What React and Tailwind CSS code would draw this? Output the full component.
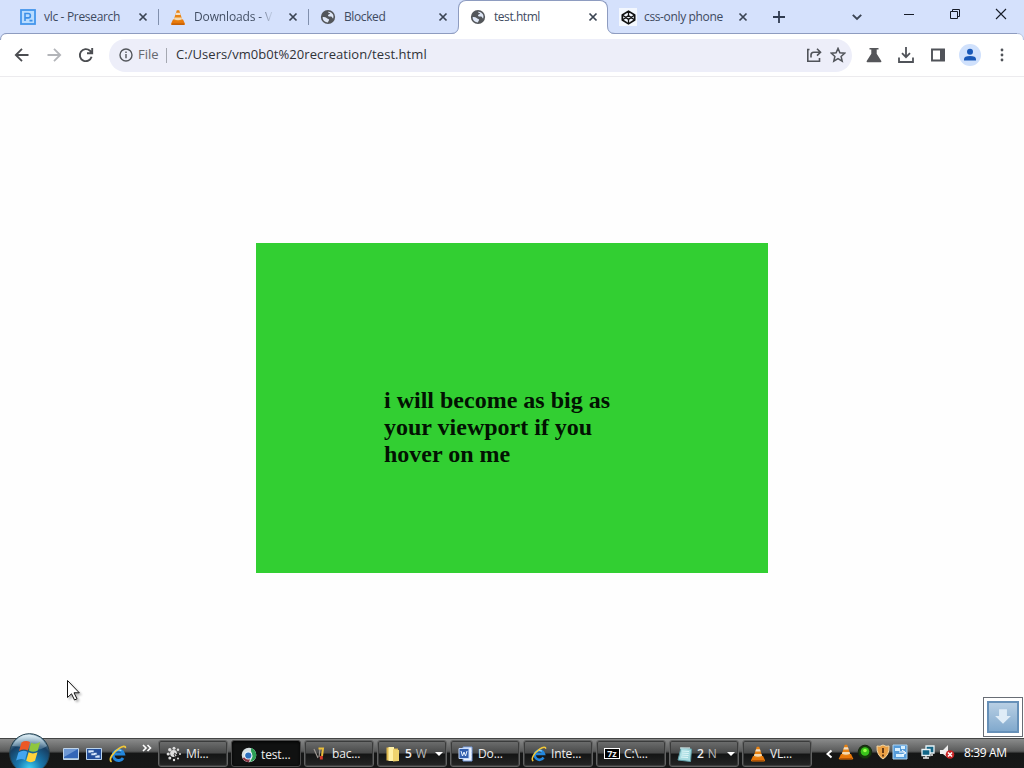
import React from "react";

function Cone({ className }) {
  return (
    <svg viewBox="0 0 16 16" className={className}>
      <path d="M3 10h10l2 4.2q.2 1.200-.8 1.200H1.800q-1 0-.8-1.200z" fill="#e8780a" />
      <path d="M6.800.8h2.400l3.300 10.200q-4.500 2.600-9 0z" fill="#e98212" />
      <path d="M6.100 3.200h3.800l.8 2.300H5.300z" fill="#f2dfc4" />
      <path d="M4.500 8h7l.6 1.800q-4.100 1.800-8.200 0z" fill="#f4d9b0" />
      <path d="M2 14.600h12" stroke="#b05205" strokeWidth="1" />
    </svg>
  );
}

function Presearch() {
  return (
    <svg viewBox="0 0 16 16" className="h-4 w-4">
      <rect x="1" y="1" width="14" height="14" fill="#b9dcff" stroke="#4496ec" strokeWidth="1.800" />
      <path d="M5 12V4.500h3.200a2.200 2.200 0 0 1 0 4.400H5M9.500 11.600h3" fill="none" stroke="#3b8fe8" strokeWidth="1.600" />
    </svg>
  );
}

function Globe() {
  return (
    <svg viewBox="0 0 16 16" className="h-4 w-4">
      <circle cx="8" cy="8" r="7.100" fill="#53565a" />
      <path d="M2.600 8.200c1.600-.3 3.200.1 4.400 1.100.9.7 1.900.5 2.100 1.500.2.9-.9 1-1.100 2.600-3-.1-5.400-2.200-5.400-5.200zM7.800 2.700c2-.4 4.200 1 5.200 2.900.6 1.300.6 2.600.1 3.900-.6-.1-.8-1.300-1.500-1.800-.9-.6-2.200.1-3.100-.5-.8-.5-.5-1.400.2-1.700.6-.3 1.300 0 1.400-.8.100-.8-1.900-.8-2.300-2z" fill="#dfe7f6" />
    </svg>
  );
}

function Codepen() {
  return (
    <span className="flex h-[18px] w-[18px] shrink-0 items-center justify-center bg-[#f3f7fe]">
      <svg viewBox="0 0 16 16" className="h-[15px] w-[15px]" fill="none" stroke="#111" strokeWidth="1.400" strokeLinejoin="round">
        <path d="M8 1.200 14.600 5.400v5.200L8 14.800 1.400 10.600V5.400z" strokeWidth="1.800" />
        <path d="M1.400 5.400 8 10l6.600-4.600M1.400 10.600 8 6l6.600 4.600M8 1.200V6M8 10v4.800" />
      </svg>
    </span>
  );
}

function TabX() {
  return (
    <svg viewBox="0 0 16 16" className="h-4 w-4 shrink-0" fill="none" stroke="#3b4453" strokeWidth="1.700">
      <path d="m4.500 4.500 7 7m0-7-7 7" />
    </svg>
  );
}

function Tab({ icon, title, width, active, divider, fade }) {
  return (
    <div className={`relative flex h-[34px] w-[150px] shrink-0 items-center pr-[7px] ${active ? "rounded-t-[8px] border border-b-0 border-[#8e9cc0] bg-white pb-px pl-[11px]" : "pl-3"}`}>
      <span className="flex h-4 w-4 shrink-0 items-center justify-center">{icon}</span>
      <span className={`ml-2 w-[91px] shrink-0 text-[12px] whitespace-nowrap ${width} ${fade ? "bg-gradient-to-r from-[#3e4a5f] from-72% to-[#b8c4dc] to-84% bg-clip-text text-transparent" : "text-[#3e4a5f]"}`}>{title}</span>
      <TabX />
      {divider && <span className="absolute top-[9px] -right-px h-4 w-px bg-[#8190ad]" />}
      {active && (
        <>
          <svg viewBox="0 0 8 8" className="absolute bottom-0 -left-2 h-2 w-2"><path d="M8 0v8H0q7.500 0 7.500-8" fill="#fff" /><path d="M0 7.500Q7.500 7.500 7.500 0" fill="none" stroke="#8e9cc0" /></svg>
          <svg viewBox="0 0 8 8" className="absolute -right-2 bottom-0 h-2 w-2"><path d="M0 0v8h8Q.5 8 .5 0" fill="#fff" /><path d="M8 7.500Q.5 7.500.5 0" fill="none" stroke="#8e9cc0" /></svg>
        </>
      )}
    </div>
  );
}

function TabStrip() {
  return (
    <div className="flex h-[34px] border-b border-[#8e9cc0] bg-[#d5e1fc] pl-2">
      <Tab icon={<Presearch />} title="vlc - Presearch" width="tracking-[-0.320px]" divider />
      <Tab icon={<Cone className="h-[17px] w-4" />} title="Downloads - V" width="tracking-[-0.140px]" divider fade />
      <Tab icon={<Globe />} title="Blocked" width="tracking-[-0.400px]" />
      <Tab icon={<Globe />} title="test.html" width="tracking-[-0.450px]" active />
      <Tab icon={<Codepen />} title="css-only phone" width="tracking-[-0.360px]" />
      <svg viewBox="0 0 16 16" className="mt-[9px] ml-[13px] h-4 w-4 shrink-0" stroke="#303b50" strokeWidth="1.800"><path d="M2 8h12M8 2v12" /></svg>
      <svg viewBox="0 0 16 16" className="mt-[9px] ml-[62px] h-4 w-4 shrink-0" fill="none" stroke="#3b4453" strokeWidth="1.900"><path d="m3.800 5.800 4.200 4.200 4.200-4.200" /></svg>
      <div className="mt-[7px] ml-[38px] flex w-[104px] shrink-0 justify-between text-[#171c28]">
        <svg viewBox="0 0 12 14" className="h-[14px] w-3" stroke="currentColor"><path d="M1 7.500h10" /></svg>
        <svg viewBox="0 0 12 14" className="h-[14px] w-3" fill="none" stroke="currentColor"><path d="M1.500 4.500h7v7h-7zM3.500 4.500v-2h7v7h-2" /></svg>
        <svg viewBox="0 0 12 14" className="h-[14px] w-3" stroke="currentColor" strokeWidth="1.100"><path d="m1 2 10 10M11 2 1 12" /></svg>
      </div>
    </div>
  );
}

function Toolbar() {
  return (
    <div className="relative flex h-[43px] items-center border-b border-[#ecebee] bg-white pl-[13px]">
      <svg viewBox="0 0 7 7" className="absolute top-[-1px] left-0 h-[7px] w-[7px]"><path d="M0 0h7Q.5.500.5 7H0z" fill="#d5e1fc" /><path d="M7 .5Q.5.500.5 7" fill="none" stroke="#8e9cc0" /></svg>
      <svg viewBox="0 0 7 7" className="absolute top-[-1px] right-0 h-[7px] w-[7px]"><path d="M7 0H0q6.500.5 6.500 7H7z" fill="#d5e1fc" /><path d="M0 .5Q6.500.500 6.500 7" fill="none" stroke="#b9c5e2" /></svg>
      <svg viewBox="0 0 18 18" className="h-[18px] w-[18px]" fill="none" stroke="#4b4d51" strokeWidth="1.800"><path d="M15.500 9H3M9 2.800 2.800 9 9 15.200" /></svg>
      <svg viewBox="0 0 18 18" className="ml-[14px] h-[18px] w-[18px]" fill="none" stroke="#b3b5b9" strokeWidth="1.800"><path d="M2.500 9H15M9 2.800 15.200 9 9 15.200" /></svg>
      <svg viewBox="0 0 18 18" className="ml-[14px] h-[18px] w-[18px]" fill="none" stroke="#4b4d51" strokeWidth="1.900"><path d="M14.600 10.800A6 6 0 1 1 13 4.800L15 6.800M15.200 2v5.200H10" /></svg>
      <div className="ml-[14px] flex h-[33px] w-[743px] items-center rounded-full bg-[#edeef9] pl-[10px]">
        <svg viewBox="0 0 14 14" className="h-[14px] w-[14px]" fill="none" stroke="#53565b" strokeWidth="1.400"><circle cx="7" cy="7" r="6" /><path d="M7 6v4.200M7 3.600v1.500" /></svg>
        <span className="ml-[5px] w-[28px] text-[13px] text-[#66686e]">File</span>
        <span className="h-[15px] w-px bg-[#a5a8b1]" />
        <span className="ml-[9px] text-[13px] tracking-[0.060px] whitespace-nowrap text-[#303238]">C:/Users/vm0b0t%20recreation/test.html</span>
        <svg viewBox="0 0 16 16" className="mr-2 ml-auto h-4 w-4" fill="none" stroke="#505359" strokeWidth="1.600"><path d="M3.500 2.500h-1.700v11.700H13.500V11M5 10.500V8q0-2.800 2.800-2.800h6M11 1.800l3.500 3.400L11 8.600" /></svg>
        <svg viewBox="0 0 16 16" className="mr-[6px] h-4 w-4" fill="none" stroke="#505359" strokeWidth="1.500"><path d="m8 1.400 1.900 4.300 4.800.5-3.600 3.200 1.100 4.800L8 11.700l-4.200 2.500 1.100-4.800-3.600-3.200 4.800-.5z" /></svg>
      </div>
      <svg viewBox="0 0 16 16" className="ml-[14px] h-4 w-4" fill="#55565a"><path d="M3.500 1h9v1.500h-1.800v4.200L15.300 14q.5 1.200-.8 1.200h-13Q.2 15.200.7 14l4.600-7.300V2.500H3.500z" /></svg>
      <svg viewBox="0 0 18 18" className="ml-[15px] h-[18px] w-[18px]" fill="none" stroke="#505359" strokeWidth="1.800"><path d="M9 1v10M5 7.200l4 4 4-4M2 11.500V16h14v-4.500" /></svg>
      <svg viewBox="0 0 16 16" className="ml-[15px] h-4 w-4"><path d="M2 2.500h12v11H2z" fill="none" stroke="#505359" strokeWidth="1.900" /><path d="M10 2h5v12h-5z" fill="#505359" /></svg>
      <svg viewBox="0 0 22 22" className="ml-[13px] h-[22px] w-[22px]"><circle cx="11" cy="11" r="11" fill="#d0e1fc" /><circle cx="11" cy="7.700" r="3" fill="#1858b8" /><path d="M5 16.500v-1.300q0-3.200 6-3.200t6 3.200v1.300z" fill="#1858b8" /></svg>
      <svg viewBox="0 0 4 16" className="ml-[19px] h-4 w-1" fill="#505359"><circle cx="2" cy="3" r="1.400" /><circle cx="2" cy="8" r="1.400" /><circle cx="2" cy="13" r="1.400" /></svg>
    </div>
  );
}

function IE({ className }) {
  return (
    <svg viewBox="0 0 16 16" className={className} fill="none">
      <path d="M12.500 11.500A4.700 4.700 0 1 1 13 8H5" stroke="#2387dd" strokeWidth="2.600" />
      <path d="M5 5.800q2.500-2.500 6-.8" stroke="#91d5ff" strokeWidth="1" />
      <path d="M2.300 15C-.8 13 3.600 6.500 8.600 3.200 12.200.8 15 .4 14.500 2.800" stroke="#f2c839" strokeWidth="1.500" />
    </svg>
  );
}

function StartOrb() {
  return (
    <svg viewBox="0 0 42 36" className="absolute top-[-6px] left-[8px] h-9 w-[42px]">
      <defs>
        <radialGradient id="orb" cx=".5" cy=".88" r=".85">
          <stop offset="0" stopColor="#41d2f5" /><stop offset=".35" stopColor="#1878ae" /><stop offset=".75" stopColor="#173f63" /><stop offset="1" stopColor="#7b9db2" />
        </radialGradient>
        <linearGradient id="orbShine" x2="0" y2="1"><stop stopColor="#e8f5fb" stopOpacity=".95" /><stop offset="1" stopColor="#b7d9e8" stopOpacity=".2" /></linearGradient>
      </defs>
      <circle cx="21.500" cy="20.500" r="19.800" fill="url(#orb)" stroke="#24414f" strokeWidth="1" />
      <path d="M4 13Q10 1 21.500 1.500T39 13Q30 19 21.500 16T4 13" fill="url(#orbShine)" />
      <path d="M13.500 9.500q4-2.500 8.500-.500L20 17.500q-4.500-2-9 .5z" fill="#ec5926" />
      <path d="M23.200 9.700q4.200 2.300 9-.6l-2.400 8.400q-4.500 2.400-8.900 0z" fill="#8fc73e" />
      <path d="M10.400 19.600q4.500-3 8.900-.9L17 27q-4.300-2.300-8.900.6z" fill="#43a5ef" />
      <path d="M20.600 19.300q4.200 2.300 8.900 0L27 27.800q-4.200 2.700-8.800 0z" fill="#ffd23b" />
    </svg>
  );
}

const taskIcons = {
  spinner: <svg viewBox="0 0 16 16" className="h-4 w-4"><g fill="#dedede"><circle cx="8" cy="2.200" r="1.500" /><circle cx="3.800" cy="3.800" r="1.700" /><circle cx="2.200" cy="8" r="1.600" /><circle cx="3.800" cy="12" r="1.500" /><circle cx="8" cy="14" r="1.200" /><circle cx="12" cy="12.500" r="1" /><circle cx="14" cy="8" r="1" /><circle cx="12" cy="3.800" r="1.200" /><circle cx="7.500" cy="7.500" r="3.400" /></g><path d="m8 7 5 3M8 8l2 5" stroke="#333" /></svg>,
  chrome: <svg viewBox="0 0 16 16" className="h-4 w-4"><circle cx="8" cy="8" r="7.300" fill="#d7dfe1" /><path d="M10 1a7.300 7.300 0 0 1 3.500 11.700L9 15.200l2.500-5.500L10 4z" fill="#2c9f55" /><path d="M1.500 11 6 10l3 2-1 3.200Q3.500 15 1.500 11" fill="#8b3544" /><circle cx="7.300" cy="8.500" r="4" fill="#e9f5ff" /><circle cx="7.300" cy="8.500" r="3.100" fill="#2c70bd" /></svg>,
  tools: <svg viewBox="0 0 16 16" className="h-4 w-4" fill="none"><path d="m2 3 4 9M7 11l1-8" stroke="#9f9994" strokeWidth="1.200" /><path d="M6.500 2.500H11L10 10" stroke="#e8bd3c" strokeWidth="2" /><path d="M9.300 10v3.500" stroke="#d43b2a" strokeWidth="3" /></svg>,
  folder: <svg viewBox="0 0 16 16" className="h-4 w-4"><path d="M1.500 1.500H7l1 1h5v12H1.500z" fill="#dfb94e" /><path d="M3.500 1H9v14H3.500z" fill="#fff0a6" /><path d="m8 3 6 1v11l-6 .5z" fill="#efd36e" /></svg>,
  word: <svg viewBox="0 0 16 16" className="h-4 w-4"><path d="M5 1h9v14H5z" fill="#eef4ff" stroke="#769bdc" /><path d="M1 2.500h10v10H1z" fill="#325fae" stroke="#c7daf8" /><path d="m3 5 1.500 5L6 6l1.500 4L9 5M12 5h1.500M12 8h1.500M12 11h1.500" fill="none" stroke="#eaf3ff" /></svg>,
  ie: <IE className="h-4 w-4" />,
  note: <svg viewBox="0 0 16 16" className="h-4 w-4"><path d="m4 2 10.500 1-1 12.500L1 14z" fill="#a8dce1" stroke="#5e9da6" /><path d="M4 1v2M6 1v2M8 1v2M10 1v2M12 1v2" stroke="#eff" /><path d="m5 5 7 .5M4.700 7l7 .5M4.500 9l7 .5M4 11l7 .5" stroke="#dff7f9" /></svg>,
  cone: <Cone className="h-4 w-4" />,
};

function TaskButton({ icon, label, active, count, arrow }) {
  return (
    <div className={`flex h-[27px] w-[70px] shrink-0 items-center rounded-[3px] border text-[12px] text-[#eee] ${active ? "border-[#4c4c4c] bg-[#101111] pt-0.5 pl-[9px] shadow-[inset_0_1px_3px_#000]" : "border-[#626363] bg-[linear-gradient(#6e6f6f_0%,#4a4b4b_46%,#141515_54%,#252626_100%)] pl-[7px] shadow-[inset_0_0_0_1px_#3b3c3c]"}`}>
      {icon === "seven" ? <span className="flex h-[11px] w-4 shrink-0 items-center justify-center border border-white bg-black text-[9px] leading-none font-bold">7z</span> : <span className="shrink-0">{taskIcons[icon]}</span>}
      <span className="ml-1 tracking-[-0.150px] whitespace-nowrap">
        {count && <b className="mr-1 font-semibold">{count}</b>}<span className={count ? "text-[#bbb]" : ""}>{label}</span>
      </span>
      {arrow && <span className="mr-[3px] ml-auto h-0 w-0 border-x-[4px] border-t-[4px] border-x-transparent border-t-white" />}
    </div>
  );
}

function Tray() {
  return (
    <div className="ml-[13px] flex items-center pb-[3px] text-white">
      <svg viewBox="0 0 8 10" className="mt-[3px] h-[10px] w-2" fill="none" stroke="white" strokeWidth="2"><path d="M6.500 1.500 2.500 5l4 3.500" /></svg>
      <Cone className="ml-[5px] h-4 w-4" />
      <svg viewBox="0 0 16 16" className="ml-[3px] h-4 w-4"><circle cx="8" cy="8" r="6.800" fill="#173b0d" stroke="#142410" /><circle cx="8" cy="7.500" r="4.300" fill="#39c51b" /><circle cx="8" cy="6.500" r="1.800" fill="#9aff4a" /></svg>
      <svg viewBox="0 0 16 16" className="ml-[2px] h-4 w-4"><path d="M8 1q3 2 6 1 .6 9-6 13Q1.400 11 2 2q3 1 6-1" fill="#e9a045" stroke="#f5d8a5" /><path d="M8 4v5M8 10.500v2" stroke="#643914" strokeWidth="2" /></svg>
      <svg viewBox="0 0 16 16" className="ml-[1px] h-4 w-4"><path d="M1 1h14v14H1z" fill="#559bd9" stroke="#acd4f3" /><path d="M3 4h5v3H3zM9 2h4v3H9zM4 10h8v3H4z" fill="#d6efff" /><path d="m10 6 4 3-4 2M7 8h6" fill="none" stroke="white" /></svg>
      <svg viewBox="0 0 16 16" className="ml-[12px] h-4 w-4"><path d="M6 2h8v7H6z" fill="#126586" stroke="#e8f3f7" strokeWidth="1.300" /><path d="M2 5.500h8v6H2z" fill="#126586" stroke="#e8f3f7" strokeWidth="1.300" /><path d="M3 14h6M6 12v2M11 11h2" stroke="#eee" strokeWidth="1.300" /></svg>
      <svg viewBox="0 0 16 16" className="ml-[3px] h-4 w-4"><path d="M1 6h3l5-5v13l-5-4H1z" fill="#eee" /><circle cx="11" cy="10.500" r="4.300" fill="#c92325" /><path d="m9 8.500 4 4m0-4-4 4" stroke="white" strokeWidth="1.500" /></svg>
      <span className="mt-[2px] ml-[9px] text-[12px] tracking-[-0.350px] whitespace-nowrap">8:39 AM</span>
    </div>
  );
}

function Taskbar() {
  return (
    <div className="relative flex h-[30px] items-center border-t border-[#434545] bg-[linear-gradient(#8a8b8b_0%,#5a5b5b_42%,#151616_50%,#171818_100%)] pl-[62px]">
      <StartOrb />
      <svg viewBox="0 0 18 16" className="h-4 w-[18px]"><path d="M1.500 2.500h15v11h-15z" fill="#3467b8" stroke="#c0d5ea" /><path d="M2 3h14L2 11z" fill="#6e98d4" /><path d="M2 12.500h14" stroke="#9fbddb" /></svg>
      <svg viewBox="0 0 18 16" className="ml-[5px] h-4 w-[18px]"><path d="M1.500 2.500h15v11h-15z" fill="#234f9c" stroke="#bbd4ed" /><path d="M3 4h6v3H3zM6 6.500h6v3H6zM10 9h5v3h-5z" fill="#d8e8fc" stroke="#315b9e" strokeWidth=".7" /></svg>
      <IE className="ml-[6px] h-[18px] w-[18px]" />
      <svg viewBox="0 0 10 8" className="mt-[-11px] ml-[15px] h-2 w-[10px]" fill="none" stroke="white" strokeWidth="1.600"><path d="m1 1 3 3-3 3M5.500 1l3 3-3 3" /></svg>
      <div className="ml-[6px] flex gap-[3px]">
        <TaskButton icon="spinner" label="Mi..." />
        <TaskButton icon="chrome" label="test..." active />
        <TaskButton icon="tools" label="bac..." />
        <TaskButton icon="folder" count="5" label="W" arrow />
        <TaskButton icon="word" label="Do..." />
        <TaskButton icon="ie" label="Inte..." />
        <TaskButton icon="seven" label="C:\..." />
        <TaskButton icon="note" count="2" label="N" arrow />
        <TaskButton icon="cone" label="VL..." />
      </div>
      <Tray />
    </div>
  );
}

export default function App() {
  return (
    <div className="flex h-[768px] w-[1024px] flex-col overflow-hidden bg-white font-['Open_Sans','Noto_Sans',sans-serif]">
      <TabStrip />
      <Toolbar />
      <main className="relative h-[661px] bg-[#fefefe] pt-[166px]">
        <div className="mx-auto h-[330px] w-[512px] bg-[#32cf32] px-32 pt-[144px]">
          <h2 className="font-['Liberation_Serif',serif] text-[24px] leading-[27px] font-bold text-[#021202]">i will become as big as your viewport if you hover on me</h2>
        </div>
        <svg viewBox="0 0 16 24" className="absolute top-[602px] left-[66px] h-6 w-4 drop-shadow-[2px_2px_1px_#0004]"><path d="M1.500 1.500v17l4-3.700 3 6.200 2.500-1.200-3-6h5.300z" fill="white" stroke="#111" /></svg>
        <div className="absolute top-[620px] left-[983px] h-10 w-10 border border-[#686d75] bg-white p-[3px]">
          <div className="flex h-full w-full items-center justify-center border-2 border-[#6690b8] bg-[linear-gradient(#b8cfe4,#81a9cd)]">
            <svg viewBox="0 0 16 16" className="h-[18px] w-[18px]"><path d="M4.500 1h7v6H15l-7 7-7-7h3.500z" fill="#dfecf7" /></svg>
          </div>
        </div>
      </main>
      <Taskbar />
    </div>
  );
}
